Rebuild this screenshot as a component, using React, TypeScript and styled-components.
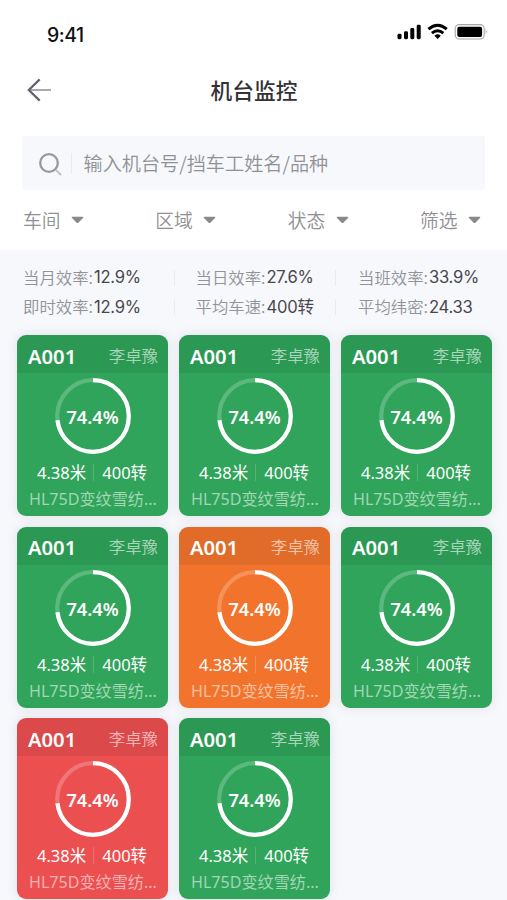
import React from 'react';
import styled, { createGlobalStyle } from 'styled-components';

const GlobalStyle = createGlobalStyle`
  * { box-sizing: border-box; }
  body {
    margin: 0;
    background: #fff;
    font-family: "Noto Sans", "Noto Sans CJK SC", sans-serif;
    overflow: hidden;
  }
`;

const Screen = styled.div`
  width: 507px;
  height: 900px;
  overflow: hidden;
  display: flex;
  flex-direction: column;
  background: #fff;
`;

const StatusBar = styled.div`
  height: 56px;
  flex: none;
  padding: 20px 19px 0 47px;
  display: flex;
  justify-content: space-between;
  align-items: flex-start;
`;

const Clock = styled.div`
  margin-top: 1px;
  font: 500 19.5px/29px Inter, sans-serif;
  letter-spacing: -0.5px;
  color: #111;
`;

const StatusIcons = styled.svg`
  display: block;
  width: 92px;
  height: 20px;
  margin-top: 2px;
`;

const TitleBar = styled.header`
  height: 80px;
  flex: none;
  padding: 0 26px;
  display: grid;
  grid-template-columns: 26px 1fr 26px;
  align-items: start;
`;

const BackIcon = styled.svg`
  display: block;
  width: 26px;
  height: 24px;
  margin-top: 22px;
`;

const Title = styled.h1`
  margin: 17px 0 0 1px;
  font: 500 21.7px/34px "Noto Sans CJK SC", sans-serif;
  color: #333336;
  text-align: center;
`;

const SearchBox = styled.div`
  height: 54px;
  flex: none;
  margin: 0 22px 0 22px;
  padding-left: 16px;
  display: flex;
  align-items: center;
  background: #f7f8fc;
  border-radius: 3px;
`;

const SearchIcon = styled.svg`
  display: block;
  width: 26px;
  height: 26px;
  margin-top: 1px;
`;

const SearchDivider = styled.span`
  width: 1px;
  height: 21px;
  margin: 0 11.5px 0 7px;
  background: #e9eaf0;
`;

const Placeholder = styled.span`
  font: 350 19.15px/28px "Noto Sans CJK SC", sans-serif;
  color: #919195;
  white-space: nowrap;
`;

const Filters = styled.nav`
  height: 60px;
  flex: none;
  padding: 0 26px 1px 23px;
  display: flex;
  justify-content: space-between;
  align-items: center;
`;

const Filter = styled.div`
  display: flex;
  align-items: center;
  font: 350 18.8px/28px "Noto Sans CJK SC", sans-serif;
  color: #909094;
`;

const Caret = styled.svg`
  display: block;
  width: 13px;
  height: 8px;
  margin: 1px 0 0 10.5px;
`;

const Content = styled.main`
  flex: 1;
  background: #f7f8fc;
  padding: 13px 15px 0 17px;
`;

const Stats = styled.section`
  height: 72px;
  padding-left: 6px;
  display: grid;
  grid-template-columns: 172.5px 162.5px 1fr;
  grid-auto-rows: 29.6px;
`;

const Stat = styled.div`
  display: flex;
  align-items: center;
  color: #929297;
  white-space: nowrap;
`;

const StatLabel = styled.span`
  margin-top: -1px;
  font: 350 16.4px/29px "Noto Sans CJK SC", sans-serif;
`;

const StatDivider = styled.span<{ $right: number }>`
  width: 1px;
  height: 16px;
  margin-left: auto;
  margin-right: ${(p) => p.$right}px;
  background: #eaebf1;
`;

const StatValue = styled.b`
  font: 400 16.6px/29px Inter, "Noto Sans CJK SC", sans-serif;
  letter-spacing: -0.25px;
  color: #48484c;
  margin-left: 1px;
`;

const Grid = styled.section`
  display: grid;
  grid-template-columns: repeat(3, 151px);
  grid-auto-rows: 181px;
  gap: 10.6px 11px;
`;

const Card = styled.article<{ $color: string }>`
  background: ${(p) => p.$color};
  border-radius: 9px;
  overflow: hidden;
  box-shadow: 0 0 11px rgba(70, 75, 110, 0.13);
  color: #fff;
`;

const CardHead = styled.div`
  height: 38px;
  padding: 3px 10px 0 11px;
  display: flex;
  justify-content: space-between;
  align-items: center;
  background: rgba(0, 0, 0, 0.065);
`;

const MachineId = styled.span`
  font-size: 20.2px;
  line-height: 30px;
  font-weight: 600;
`;

const Worker = styled.span`
  margin-top: -2px;
  font: 350 16.4px/28px "Noto Sans CJK SC", sans-serif;
  color: rgba(255, 255, 255, 0.62);
`;

const Gauge = styled.div`
  display: grid;
  width: 76px;
  height: 76px;
  margin: 5px auto 0;
  > * { grid-area: 1 / 1; }
`;

const Ring = styled.svg`
  display: block;
  width: 76px;
  height: 76px;
`;

const Percent = styled.span`
  place-self: center;
  padding-top: 2px;
  font-size: 18.2px;
  line-height: 26px;
  font-weight: 600;
`;

const Metrics = styled.div`
  height: 27px;
  margin-top: 5px;
  padding-left: 20px;
  display: flex;
  align-items: center;
  font-size: 16.5px;
  line-height: 27px;
  font-weight: 400;
  white-space: nowrap;
`;

const MetricDivider = styled.span`
  width: 1px;
  height: 17px;
  margin: 0 8px 0 7px;
  background: rgba(255, 255, 255, 0.18);
`;

const Product = styled.div`
  padding-left: 12px;
  font-size: 16.1px;
  line-height: 27px;
  font-weight: 400;
  color: rgba(255, 255, 255, 0.56);
  white-space: nowrap;
`;

const filters = ['车间', '区域', '状态', '筛选'];

const stats = [
  ['当月效率:', '12.9%'],
  ['当日效率:', '27.6%'],
  ['当班效率:', '33.9%'],
  ['即时效率:', '12.9%'],
  ['平均车速:', '400转'],
  ['平均纬密:', '24.33'],
];

const GREEN = '#2fa45a';
const ORANGE = '#f2742c';
const RED = '#ec4f50';
const machines = [GREEN, GREEN, GREEN, GREEN, ORANGE, GREEN, RED, GREEN];

const RADIUS = 35.8;
const CIRCUMFERENCE = 2 * Math.PI * RADIUS;

function MachineCard({ color }: { color: string }) {
  return (
    <Card $color={color}>
      <CardHead>
        <MachineId>A001</MachineId>
        <Worker>李卓豫</Worker>
      </CardHead>
      <Gauge>
        <Ring viewBox="0 0 76 76">
          <g fill="none" stroke="#fff" strokeWidth="4.2" transform="rotate(-90 38 38)">
            <circle cx="38" cy="38" r={RADIUS} strokeOpacity=".22" />
            <circle cx="38" cy="38" r={RADIUS} strokeDasharray={`${CIRCUMFERENCE * 0.73} ${CIRCUMFERENCE}`} />
          </g>
        </Ring>
        <Percent>74.4%</Percent>
      </Gauge>
      <Metrics>
        <span>4.38米</span>
        <MetricDivider />
        <span>400转</span>
      </Metrics>
      <Product>HL75D变纹雪纺...</Product>
    </Card>
  );
}

export default function App() {
  return (
    <>
      <GlobalStyle />
      <Screen>
        <StatusBar>
          <Clock>9:41</Clock>
          <StatusIcons viewBox="0 0 92 20">
            <rect x="1.5" y="11.8" width="4" height="5.4" rx="1.4" />
            <rect x="8" y="9.3" width="4" height="7.9" rx="1.4" />
            <rect x="14.3" y="6" width="4" height="11.2" rx="1.4" />
            <rect x="20.7" y="2.7" width="4" height="14.5" rx="1.4" />
            <g fill="none" stroke="#000" strokeWidth="2.9">
              <path d="M32.4 7.2Q41.6 -.8 50.8 7.2" />
              <path d="M35.9 11.2Q41.6 6.2 47.3 11.2" />
            </g>
            <path d="M38.4 13.7Q41.6 10.9 44.8 13.7L41.6 17.1Z" />
            <rect x="59.2" y="2.6" width="29" height="14.4" rx="4" fill="none" stroke="#a6a6a6" strokeWidth="1.1" />
            <rect x="61.3" y="4.7" width="24.8" height="10.2" rx="2" />
            <path d="M89.7 7.8Q92 9.8 89.7 11.9Z" fill="#a6a6a6" />
          </StatusIcons>
        </StatusBar>
        <TitleBar>
          <BackIcon viewBox="0 0 26 24" fill="none">
            <path d="M2.5 12H25" stroke="#a9a9b3" strokeWidth="2" />
            <path d="M13.7 1.4L2.8 12L13.7 22.6" stroke="#62626e" strokeWidth="2.2" />
          </BackIcon>
          <Title>机台监控</Title>
        </TitleBar>
        <SearchBox>
          <SearchIcon viewBox="0 0 26 26" fill="none">
            <path d="M18 19L23 24" stroke="#c4c4c9" strokeWidth="2.2" />
            <circle cx="11" cy="12" r="8.8" stroke="#98989e" strokeWidth="2.3" />
          </SearchIcon>
          <SearchDivider />
          <Placeholder>输入机台号/挡车工姓名/品种</Placeholder>
        </SearchBox>
        <Filters>
          {filters.map((label) => (
            <Filter key={label}>
              {label}
              <Caret viewBox="0 0 13 8">
                <path d="M1.6 .7H11.4Q13 .8 12 2L7.6 6.4Q6.5 7.4 5.4 6.4L1 2Q0 .8 1.6 .7Z" fill="#89898d" />
              </Caret>
            </Filter>
          ))}
        </Filters>
        <Content>
          <Stats>
            {stats.map(([label, value], i) => (
              <Stat key={label}>
                <StatLabel>{label}</StatLabel>
                <StatValue>{value}</StatValue>
                {i % 3 < 2 && <StatDivider $right={i % 3 === 0 ? 21 : 22} />}
              </Stat>
            ))}
          </Stats>
          <Grid>
            {machines.map((color, i) => (
              <MachineCard key={i} color={color} />
            ))}
          </Grid>
        </Content>
      </Screen>
    </>
  );
}
